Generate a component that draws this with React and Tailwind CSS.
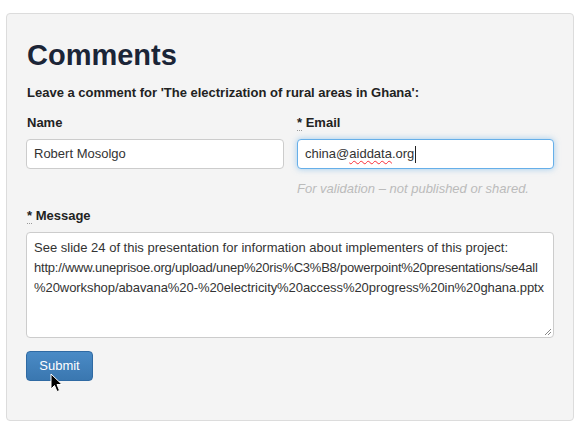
import React from 'react'

// Formulario de comentarios, estilo Bootstrap 2 con panel gris.
function Req() {
  return <abbr className="no-underline border-b border-dotted border-[#999] cursor-help">*</abbr>
}

export default function App() {
  return (
    <div className="w-[581px] h-[427px] bg-white pt-[13px] pl-[6px] font-['Liberation_Sans',Arial,sans-serif] text-[#222]">
      <div className="w-[568px] h-[408px] bg-[#f4f4f4] border border-[#dcdcdc] rounded-[4px] px-[19px] pt-[25px]">
        <h1 className="text-[29px] leading-[33px] font-bold text-[#1b2537] pl-[1px]">Comments</h1>
        <p className="mt-[12px] text-[13px] leading-[18px] font-bold pl-[1px]">
          Leave a comment for 'The electrization of rural areas in Ghana':
        </p>

        <div className="mt-[12px] flex gap-[13px]">
          <div className="w-[258px]">
            <div className="text-[13px] leading-[18px] font-bold pl-[1px]">Name</div>
            <div className="mt-[7px] h-[30px] bg-white border border-[#ccc] rounded-[4px] px-[7px] flex items-center text-[13px] text-[#333]">
              Robert Mosolgo
            </div>
          </div>
          <div className="w-[257px]">
            <div className="text-[13px] leading-[18px] font-bold">
              <Req /> Email
            </div>
            <div className="mt-[7px] h-[30px] bg-white border border-[#66afe9] rounded-[4px] px-[7px] flex items-center text-[13px] text-[#333] shadow-[0_0_6px_rgba(102,175,233,0.6)]">
              china@<span className="underline decoration-wavy decoration-red-500 decoration-1 underline-offset-2">aiddata</span>.org
              <span className="ml-[1px] w-px h-[17px] bg-[#222]"></span>
            </div>
            <div className="mt-[11px] text-[13px] leading-[18px] italic text-[#bbb]">
              For validation – not published or shared.
            </div>
          </div>
        </div>

        <div className="mt-[9px] text-[13px] leading-[18px] font-bold pl-[1px]">
          <Req /> Message
        </div>
        <div className="relative mt-[7px] h-[106px] bg-white border border-[#ccc] rounded-[4px] px-[7px] pt-[5px] text-[13px] leading-[20px] text-[#333] whitespace-nowrap">
          <div>See slide 24 of this presentation for information about implementers of this project:</div>
          <div className="tracking-[-0.23px]">http://www.uneprisoe.org/upload/unep%20ris%C3%B8/powerpoint%20presentations/se4all</div>
          <div className="tracking-[-0.07px]">%20workshop/abavana%20-%20electricity%20access%20progress%20in%20ghana.pptx</div>
          <svg className="absolute right-[1px] bottom-[1px]" width="8" height="8" viewBox="0 0 8 8">
            <path d="M7 1L1 7M7 4L4 7" stroke="#888" strokeWidth="1" />
          </svg>
        </div>

        <div className="relative mt-[13px]">
          <button className="w-[67px] h-[30px] rounded-[4px] border border-[#2f6aa3] bg-gradient-to-b from-[#4a8bc6] to-[#3a77b0] text-white text-[13px]">
            Submit
          </button>
          <svg className="absolute left-[24px] top-[22px]" width="14" height="20" viewBox="0 0 14 20">
            <path d="M1 1V16L4.5 12.5L7 18.5L9.5 17.5L7 11.5H12Z" fill="#000" stroke="#fff" strokeWidth="1" strokeLinejoin="round" />
          </svg>
        </div>
      </div>
    </div>
  )
}
